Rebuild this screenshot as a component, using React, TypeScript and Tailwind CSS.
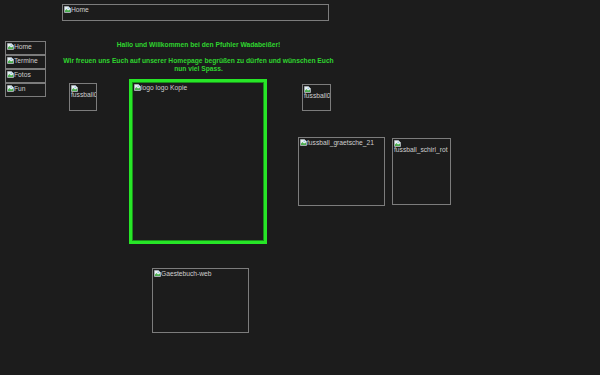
import React from "react";

function BrokenIcon() {
    return (
        <svg width="7" height="7" viewBox="0 0 7 7" className="inline-block shrink-0 align-top">
            <path d="M0.5 0.5 H4.5 L6.5 2.5 V6.5 H0.5 Z" fill="#e8eef2" stroke="#b9c2c8" strokeWidth="0.6" />
            <path d="M1 4.5 L2.5 3 L4 4.5 L6 3.5 V6 H1 Z" fill="#4caf50" />
            <circle cx="4.2" cy="2.2" r="0.7" fill="#7ab6e0" />
        </svg>
    );
}

function Broken({ label, className, wrap }: { label: string; className: string; wrap?: boolean }) {
    return (
        <div className={`border border-[#7c7c7c] overflow-hidden p-px text-[6.7px] leading-[8px] text-[#cfcfcf] ${className}`}>
            {wrap ? (
                <div className="flex flex-col">
                    <BrokenIcon />
                    <span className="whitespace-nowrap -mt-px">{label}</span>
                </div>
            ) : (
                <div className="flex items-start whitespace-nowrap">
                    <BrokenIcon />
                    <span>{label}</span>
                </div>
            )}
        </div>
    );
}

export default function App() {
    return (
        <div className="w-[600px] h-[375px] bg-[#1c1c1c] flex font-['Liberation_Sans',Arial,sans-serif] overflow-hidden">
            {/* left nav */}
            <div className="w-[62px] shrink-0 pl-[5px] pt-[41px] flex flex-col">
                <Broken label="Home" className="w-[41px] h-[14px]" />
                <Broken label="Termine" className="w-[41px] h-[14px]" />
                <Broken label="Fotos" className="w-[41px] h-[14px]" />
                <Broken label="Fun" className="w-[41px] h-[14px]" />
            </div>

            {/* main */}
            <div className="pt-[4px] flex flex-col">
                <Broken label="Home" className="w-[267px] h-[17px]" />

                <div className="w-[273px] mt-[20px] text-center font-bold text-[6.7px] leading-[8px] text-[#2fd42f]">
                    <p>Hallo und Willkommen bei den Pfuhler Wadabeißer!</p>
                    <p className="mt-[8px]">
                        Wir freuen uns Euch auf unserer Homepage begrüßen zu dürfen und wünschen Euch nun viel Spass.
                    </p>
                </div>

                <div className="mt-[6px] flex items-start">
                    <Broken label="fussball01" wrap className="ml-[7px] mt-[4px] w-[28px] h-[28px]" />

                    <div className="ml-[32px] flex flex-col">
                        <div className="w-[138px] h-[165px] border-[3px] border-[#27e627]">
                            <div className="w-full h-full border border-[#1b8f1b] p-px text-[6.7px] leading-[8px] text-[#cfcfcf]">
                                <div className="flex items-start whitespace-nowrap">
                                    <BrokenIcon />
                                    <span>logo logo Kopie</span>
                                </div>
                            </div>
                        </div>
                        <Broken label="Gaestebuch-web" className="ml-[23px] mt-[24px] w-[97px] h-[65px]" />
                    </div>

                    <div className="ml-[31px] flex flex-col">
                        <Broken label="fussball01" wrap className="ml-[4px] mt-[5px] w-[29px] h-[27px]" />
                        <div className="mt-[26px] flex items-start">
                            <Broken label="fussball_graetsche_21" className="w-[87px] h-[69px]" />
                            <Broken label="fussball_schirl_rot" wrap className="ml-[7px] mt-px w-[59px] h-[67px]" />
                        </div>
                    </div>
                </div>
            </div>
        </div>
    );
}
